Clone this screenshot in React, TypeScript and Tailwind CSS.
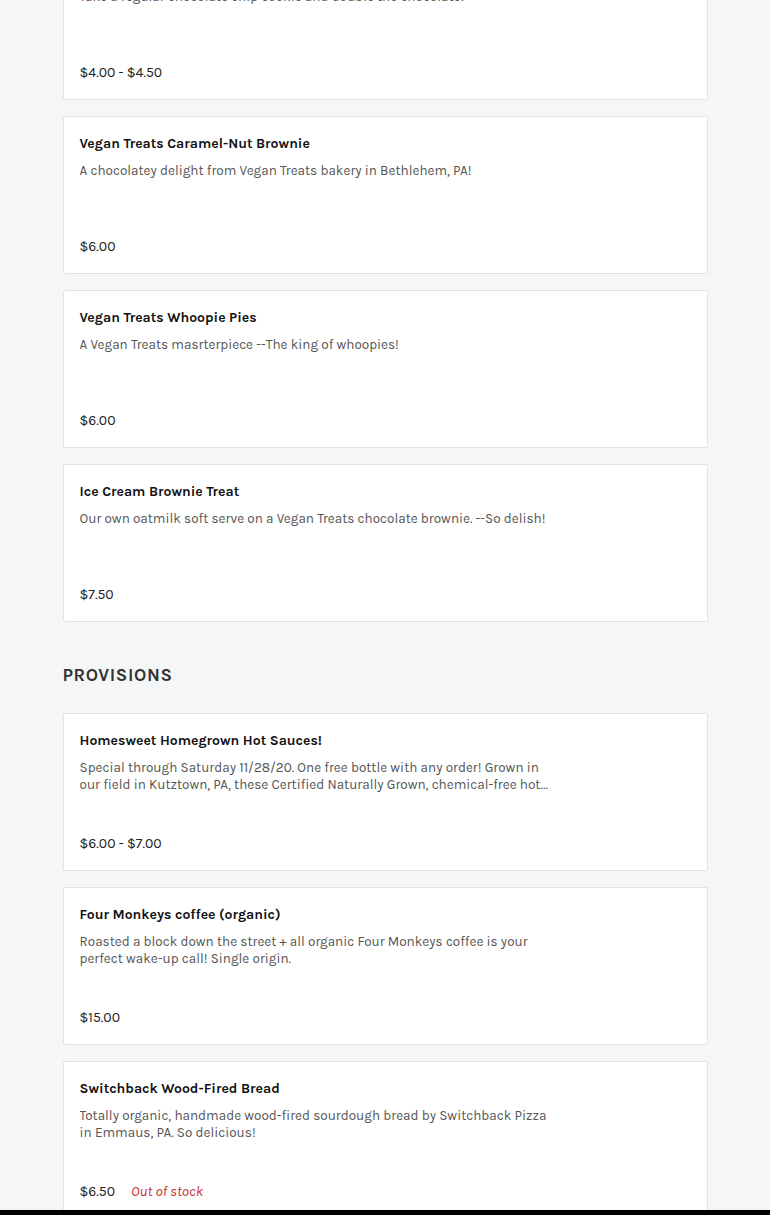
const FONT = "font-['Karla','Lato','Noto_Sans',sans-serif]";

type Item = { name: string; desc: string; price: string; soldOut?: boolean };

const treats: Item[] = [
  {
    name: 'Double Chocolate Chip Cookie',
    desc: 'Take a regular chocolate chip cookie and double the chocolate!',
    price: '$4.00 - $4.50',
  },
  {
    name: 'Vegan Treats Caramel-Nut Brownie',
    desc: 'A chocolatey delight from Vegan Treats bakery in Bethlehem, PA!',
    price: '$6.00',
  },
  {
    name: 'Vegan Treats Whoopie Pies',
    desc: 'A Vegan Treats masrterpiece --The king of whoopies!',
    price: '$6.00',
  },
  {
    name: 'Ice Cream Brownie Treat',
    desc: 'Our own oatmilk soft serve on a Vegan Treats chocolate brownie. --So delish!',
    price: '$7.50',
  },
];

const provisions: Item[] = [
  {
    name: 'Homesweet Homegrown Hot Sauces!',
    desc: 'Special through Saturday 11/28/20. One free bottle with any order! Grown in our field in Kutztown, PA, these Certified Naturally Grown, chemical-free hot peppers are made into small batch sauces.',
    price: '$6.00 - $7.00',
  },
  {
    name: 'Four Monkeys coffee (organic)',
    desc: 'Roasted a block down the street + all organic Four Monkeys coffee is your perfect wake-up call! Single origin.',
    price: '$15.00',
  },
  {
    name: 'Switchback Wood-Fired Bread',
    desc: 'Totally organic, handmade wood-fired sourdough bread by Switchback Pizza in Emmaus, PA. So delicious!',
    price: '$6.50',
    soldOut: true,
  },
];

function ItemCard({ item }: { item: Item }) {
  return (
    <div className="flex h-[158px] flex-col rounded-[2px] border border-[#e1e3e6] bg-white px-4 pt-[17px] pb-4">
      <h3 className="text-[14px] leading-5 font-bold text-[#111]">{item.name}</h3>
      <p className="mt-2 line-clamp-2 max-w-[472px] text-[13.5px] leading-[17px] text-[#555]">{item.desc}</p>
      <div className="mt-auto flex items-center gap-4 text-[14px] leading-5 text-[#222]">
        <span>{item.price}</span>
        {item.soldOut && <span className="text-[14.5px] italic text-[#c8302c]">Out of stock</span>}
      </div>
    </div>
  );
}

export default function App() {
  return (
    <div className={`min-h-screen bg-[#f5f6f8] ${FONT}`}>
      <main className="mx-auto flex w-[645px] flex-col pb-10">
        <div className="mt-[-58px] flex flex-col gap-4">
          {treats.map((t) => (
            <ItemCard key={t.name} item={t} />
          ))}
        </div>

        <h2 className="mt-[43px] mb-[28px] text-[18px] leading-5 font-bold tracking-[0.6px] text-[#333]">
          PROVISIONS
        </h2>

        <div className="flex flex-col gap-4">
          {provisions.map((p) => (
            <ItemCard key={p.name} item={p} />
          ))}
        </div>
      </main>

      {/* bottom bar peeking in */}
      <div className="fixed inset-x-0 bottom-0 h-[5px] bg-black" />
    </div>
  );
}
